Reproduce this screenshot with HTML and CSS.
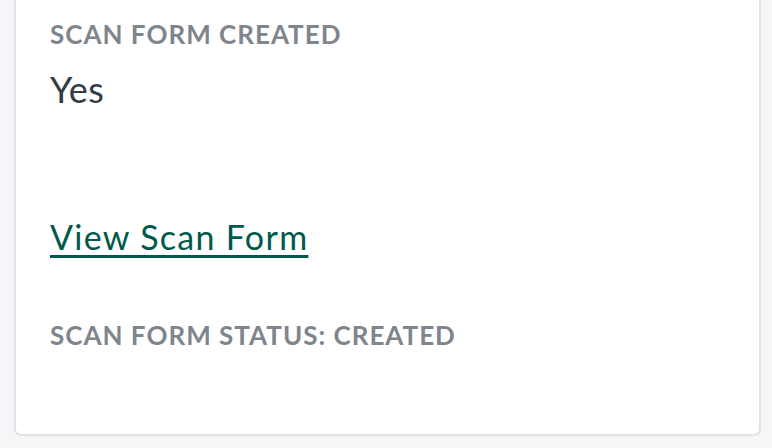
FILE: index.html
```html
<!DOCTYPE html>
<html>
<head>
<meta charset="utf-8">
<link rel="stylesheet" href="styles.css">
</head>
<body>
<div class="page">
  <div class="card">
    <div class="label">SCAN FORM CREATED</div>
    <div class="value">Yes</div>
    <a class="link" href="#">View Scan Form</a>
    <div class="status">SCAN FORM STATUS: CREATED</div>
  </div>
</div>
</body>
</html>
```
FILE: styles.css
```css
html, body {
  margin: 0;
  padding: 0;
  background: #f6f6f8;
  font-family: Lato, "Open Sans", sans-serif;
}
.page {
  width: 772px;
  height: 448px;
  box-sizing: border-box;
  padding: 0 11px 12px 14px;
  display: flex;
}
.card {
  flex: 1;
  background: #ffffff;
  border: 2px solid #e1e2e5;
  border-top: none;
  border-radius: 0 0 7px 7px;
  padding: 19px 33px 0 34px;
  display: flex;
  flex-direction: column;
  align-items: flex-start;
}
.label, .status {
  font-size: 26px;
  line-height: 30px;
  font-weight: 700;
  letter-spacing: 1px;
  color: #7e858c;
}
.value {
  font-size: 36px;
  line-height: 44px;
  color: #343c45;
  letter-spacing: 0.3px;
  margin-top: 18px;
}
.link {
  font-size: 34px;
  line-height: 40px;
  letter-spacing: 1.3px;
  color: #00594b;
  text-decoration: underline;
  text-decoration-thickness: 3px;
  text-underline-offset: 5px;
  margin-top: 106px;
}
.status {
  margin-top: 63px;
}
```
